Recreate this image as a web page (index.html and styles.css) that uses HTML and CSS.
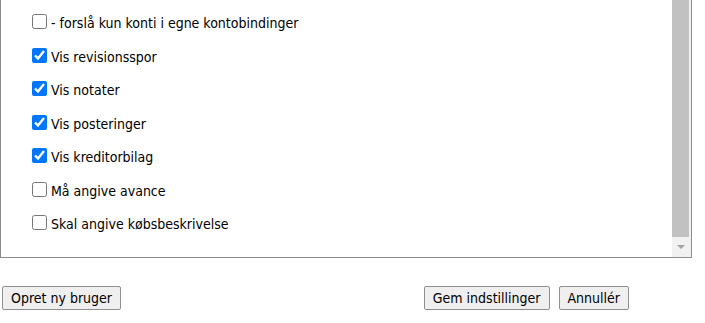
FILE: index.html
```html
<!DOCTYPE html>
<html lang="da">
<head>
<meta charset="utf-8">
<title>Indstillinger</title>
<link rel="stylesheet" href="styles.css">
</head>
<body>
<div class="panel">
  <div class="list">
    <label class="row"><input type="checkbox"><span>- forslå kun konti i egne kontobindinger</span></label>
    <label class="row"><input type="checkbox" checked><span>Vis revisionsspor</span></label>
    <label class="row"><input type="checkbox" checked><span>Vis notater</span></label>
    <label class="row"><input type="checkbox" checked><span>Vis posteringer</span></label>
    <label class="row"><input type="checkbox" checked><span>Vis kreditorbilag</span></label>
    <label class="row"><input type="checkbox"><span>Må angive avance</span></label>
    <label class="row"><input type="checkbox"><span>Skal angive købsbeskrivelse</span></label>
  </div>
  <div class="scrollbar">
    <div class="sb-up"></div>
    <div class="sb-thumb"></div>
    <div class="sb-down"><span class="arrow"></span></div>
  </div>
</div>
<div class="actions">
  <button class="btn" type="button">Opret ny bruger</button>
  <div class="group">
    <button class="btn" type="button">Gem indstillinger</button>
    <button class="btn" type="button">Annullér</button>
  </div>
</div>
</body>
</html>
```
FILE: styles.css
```css
html, body {
  margin: 0;
  padding: 0;
  background: #ffffff;
}
body {
  font-family: "DejaVu Sans Condensed", "DejaVu Sans", sans-serif;
  font-size: 14px;
  color: #000000;
}
.panel {
  margin-top: -40px;
  width: 690px;
  height: 296px;
  border: 1px solid #8d8d8d;
  display: flex;
  background: #ffffff;
}
.list {
  flex: 1;
  padding-top: 44px;
  display: flex;
  flex-direction: column;
}
.row {
  height: 33.5px;
  display: flex;
  align-items: center;
  padding-left: 31px;
}
.row input {
  width: 15px;
  height: 15px;
  margin: 0 4px 0 0;
  accent-color: #0075ff;
}
.row span {
  line-height: 16px;
  padding-top: 3px;
}
.scrollbar {
  width: 19px;
  display: flex;
  flex-direction: column;
  background: #f1f1f1;
}
.sb-up {
  height: 17px;
}
.sb-thumb {
  flex: 1;
  background: #c1c1c1;
  margin-right: 2px;
}
.sb-down {
  height: 20px;
  display: flex;
  justify-content: center;
  align-items: center;
  padding-right: 2px;
}
.arrow {
  width: 0;
  height: 0;
  border-left: 4px solid transparent;
  border-right: 4px solid transparent;
  border-top: 4px solid #a3a3a3;
}
.actions {
  margin-top: 28px;
  width: 627px;
  padding-left: 2px;
  display: flex;
  justify-content: space-between;
}
.group {
  display: flex;
  gap: 9px;
}
.btn {
  font-family: "DejaVu Sans Condensed", "DejaVu Sans", sans-serif;
  font-size: 14px;
  color: #000000;
  background: #efefef;
  border: 1px solid #8f8f8f;
  border-radius: 2px;
  height: 24px;
  padding: 0 8px;
}
```
